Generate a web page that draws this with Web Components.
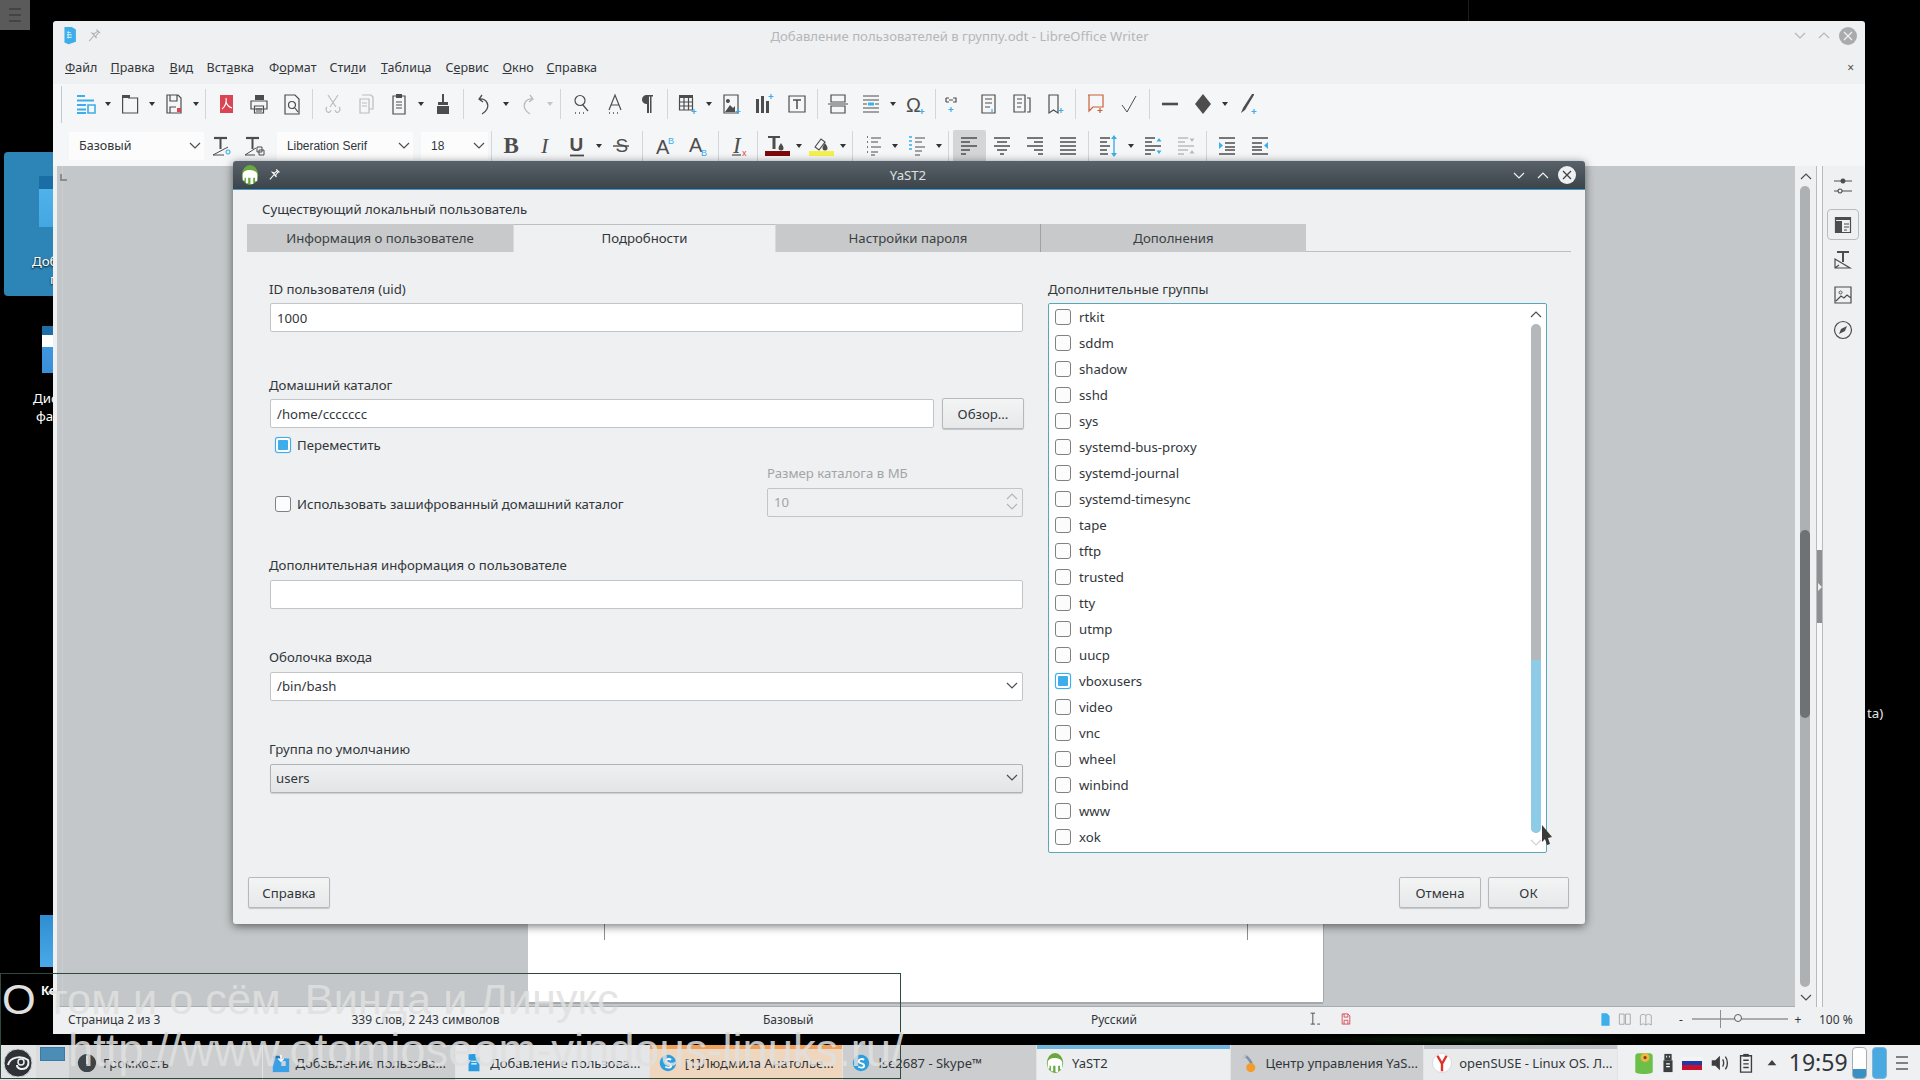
<!DOCTYPE html>
<html lang="ru">
<head>
<meta charset="utf-8">
<title>YaST2</title>
<style>
html,body{margin:0;padding:0;background:#000;overflow:hidden}
</style>
</head>
<body>
<desk-top>
  <desk-corner></desk-corner>
  <desk-icon style="left:4px;top:152px;width:160px;height:144px;--bg:#2d85b7;--f:35px;--t:24px;--fh:51px;--tx:100px;--tl:28px" kind="a"><div>Добавление</div><div style="padding-left:18px">польз</div></desk-icon>
  <desk-icon style="left:4px;top:326px;width:160px;height:110px;--f:38px;--t:0px;--fh:47px;--tx:63px" kind="b"><div>Диспетчер</div><div style="padding-left:3px">файлов</div></desk-icon>
  <desk-icon style="left:4px;top:915px;width:160px;height:90px;--f:36px;--t:0px;--fh:52px;--tx:67px;--fs:12px" kind="c"><div style="padding-left:8px;font-weight:700">Ке</div></desk-icon>
  <desk-note>ta)</desk-note>

  <writer-window>
    <menu-item style="width:45.500px"><u>Ф</u>айл</menu-item><menu-item style="width:59px"><u>П</u>равка</menu-item><menu-item style="width:37px"><u>В</u>ид</menu-item><menu-item style="width:62.500px">Вст<u>а</u>вка</menu-item><menu-item style="width:60.500px">Ф<u>о</u>рмат</menu-item><menu-item style="width:51.500px">Сти<u>л</u>и</menu-item><menu-item style="width:64.500px"><u>Т</u>аблица</menu-item><menu-item style="width:57px">С<u>е</u>рвис</menu-item><menu-item style="width:44px"><u>О</u>кно</menu-item><menu-item><u>С</u>правка</menu-item>
    <tool-bar slot="t1" style="padding-bottom:2px">
      <tool-btn icon="styles"></tool-btn><tool-drop></tool-drop><tool-btn icon="open"></tool-btn><tool-drop></tool-drop><tool-btn icon="save"></tool-btn><tool-drop></tool-drop><tool-sep></tool-sep>
      <tool-btn icon="pdf"></tool-btn><tool-btn icon="print"></tool-btn><tool-btn icon="preview"></tool-btn><tool-sep></tool-sep>
      <tool-btn icon="cut"></tool-btn><tool-btn icon="copy"></tool-btn><tool-btn icon="paste"></tool-btn><tool-drop></tool-drop><tool-btn icon="brush"></tool-btn><tool-sep></tool-sep>
      <tool-btn icon="undo"></tool-btn><tool-drop></tool-drop><tool-btn icon="redo"></tool-btn><tool-drop off></tool-drop><tool-sep style="width:10px"></tool-sep>
      <tool-btn icon="find"></tool-btn><tool-btn icon="spell"></tool-btn><tool-btn icon="pilcrow"></tool-btn><tool-sep style="width:6px"></tool-sep>
      <tool-btn icon="table"></tool-btn><tool-drop></tool-drop><tool-btn icon="image"></tool-btn><tool-btn icon="chart"></tool-btn><tool-btn icon="textbox"></tool-btn><tool-sep></tool-sep>
      <tool-btn icon="pagebreak"></tool-btn><tool-btn icon="field"></tool-btn><tool-drop></tool-drop><tool-btn icon="omega"></tool-btn><tool-sep></tool-sep>
      <tool-btn icon="link"></tool-btn><tool-btn icon="footnote"></tool-btn><tool-btn icon="endnote"></tool-btn><tool-btn icon="bookmark"></tool-btn><tool-sep></tool-sep>
      <tool-btn icon="comment"></tool-btn><tool-btn icon="check"></tool-btn><tool-sep></tool-sep>
      <tool-btn icon="line"></tool-btn><tool-btn icon="diamond"></tool-btn><tool-drop></tool-drop><tool-btn icon="pen"></tool-btn>
    </tool-bar>
    <tool-bar slot="t2">
      <tool-combo style="width:135px">Базовый</tool-combo><tool-btn icon="styleupd"></tool-btn><tool-btn icon="stylenew"></tool-btn>
      <tool-combo style="width:136px;margin-left:7px;font:12px 'Liberation Sans',sans-serif;letter-spacing:-.05px">Liberation Serif</tool-combo>
      <tool-combo style="width:67px;margin-left:8px;font:12px 'Liberation Sans',sans-serif">18</tool-combo><tool-sep style="width:7.500px"></tool-sep>
      <tool-btn icon="bold"></tool-btn><tool-btn icon="italic"></tool-btn><tool-btn icon="under" style="margin-left:-1px"></tool-btn><tool-drop></tool-drop><tool-btn icon="strike"></tool-btn><tool-sep style="width:10.500px"></tool-sep>
      <tool-btn icon="sup"></tool-btn><tool-btn icon="sub"></tool-btn><tool-sep></tool-sep>
      <tool-btn icon="clear"></tool-btn><tool-sep style="width:5.500px"></tool-sep>
      <tool-btn icon="fcolor"></tool-btn><tool-drop></tool-drop><tool-btn icon="hcolor"></tool-btn><tool-drop></tool-drop><tool-sep></tool-sep>
      <tool-btn icon="bullets"></tool-btn><tool-drop></tool-drop><tool-btn icon="numbers"></tool-btn><tool-drop></tool-drop><tool-sep></tool-sep>
      <tool-btn icon="aleft" on></tool-btn><tool-btn icon="acenter"></tool-btn><tool-btn icon="aright"></tool-btn><tool-btn icon="ajust"></tool-btn><tool-sep></tool-sep>
      <tool-btn icon="spacing"></tool-btn><tool-drop></tool-drop><tool-btn icon="paraup"></tool-btn><tool-btn icon="paradown"></tool-btn><tool-sep></tool-sep>
      <tool-btn icon="indent"></tool-btn><tool-btn icon="outdent"></tool-btn>
    </tool-bar>
    <status-bar slot="status"></status-bar>
  </writer-window>

  <yast-dialog>
    <field-label>ID пользователя (uid)</field-label>
    <text-field style="margin-top:4px">1000</text-field>
    <field-label style="margin-top:43px">Домашний каталог</field-label>
    <form-row style="margin-top:4px"><text-field style="flex:1">/home/ccccccc</text-field><push-button style="width:82px;height:31px;margin-left:8px;margin-right:-1px;margin-top:-1px">Обзор...</push-button></form-row>
    <check-box checked style="margin:6px 0 0 6px;--g:6px">Переместить</check-box>
    <form-row style="margin-top:8px">
      <check-box style="margin:31px 0 0 6px;--g:6px;flex:1">Использовать зашифрованный домашний каталог</check-box>
      <form-col style="width:256px">
        <field-label style="--c:#a2a5a7">Размер каталога в МБ</field-label>
        <text-field disabled spin style="margin-top:5px;margin-left:0">10</text-field>
      </form-col>
    </form-row>
    <field-label style="margin-top:38px">Дополнительная информация о пользователе</field-label>
    <text-field style="margin-top:5px"></text-field>
    <field-label style="margin-top:38px">Оболочка входа</field-label>
    <text-field combo style="margin-top:5px">/bin/bash</text-field>
    <field-label style="margin-top:38px">Группа по умолчанию</field-label>
    <text-field combo flat style="margin-top:5px">users</text-field>

    <field-label slot="right">Дополнительные группы</field-label>
    <group-list slot="right" style="margin-top:4px">
      <check-box>rtkit</check-box><check-box>sddm</check-box><check-box>shadow</check-box><check-box>sshd</check-box><check-box>sys</check-box><check-box>systemd-bus-proxy</check-box><check-box>systemd-journal</check-box><check-box>systemd-timesync</check-box><check-box>tape</check-box><check-box>tftp</check-box><check-box>trusted</check-box><check-box>tty</check-box><check-box>utmp</check-box><check-box>uucp</check-box><check-box checked>vboxusers</check-box><check-box>video</check-box><check-box>vnc</check-box><check-box>wheel</check-box><check-box>winbind</check-box><check-box>www</check-box><check-box>xok</check-box>
    </group-list>

    <push-button slot="foot" style="width:82px">Справка</push-button>
    <push-button slot="foot" style="width:82px;margin-left:auto">Отмена</push-button>
    <push-button slot="foot" style="width:81px;margin-left:7px">ОК</push-button>
  </yast-dialog>

  <mouse-cursor></mouse-cursor>

  <task-bar>
    <task-item icon="volume" style="--gap:6px">Громкость</task-item>
    <task-item icon="folderblue" style="--gap:5px">Добавление пользова...</task-item>
    <task-item icon="writer" state="light" style="--gap:6px">Добавление пользова...</task-item>
    <task-item icon="skype" state="urgent">[1]Людмила Анатолье...</task-item>
    <task-item icon="skype">lse2687 - Skype™</task-item>
    <task-item icon="yast" state="active">YaST2</task-item>
    <task-item icon="yastc">Центр управления YaS...</task-item>
    <task-item icon="yandex" state="lightstrip">openSUSE - Linux OS. Л...</task-item>
  </task-bar>

  <video-caption></video-caption>
</desk-top>

<script>
const S='#4d4d4d', B='#3daee9', R='#da4453', L='#b9bcbe';
const p=(d,c=S,w=1.2)=>`<path d="${d}" stroke="${c}" stroke-width="${w}" fill="none"/>`;
const f=(d,c=S)=>`<path d="${d}" fill="${c}"/>`;
const t=(s,x,y,sz,o='')=>`<text x="${x}" y="${y}" font-size="${sz}" fill="${S}" ${o}>${s}</text>`;
const ICONS={
 styles:p('M2 3h8M2 7.500h17M2 12h9M2 16.500h9M2 20h9',B,2)+p('M13 12h7v8h-7z',B,1.600),
 open:f('M3 2h8v3H3z')+p('M3.600 3v17h15V5H9'),
 save:p('M4 2h11l3 3v15H4zM7 2v6h7V2M7 20v-6h6')+f('M14 15h4v4h-4z',R),
 pdf:f('M5 2h13v18H5z',R)+p('M7 16c3-2 5-7 4-11M11 9c1 3 3 5 6 6','#fff',1.200),
 print:f('M7 2h9v5H7z')+p('M3 8h16v8H3zM6.500 13h9v7h-9z')+p('M8 16h6M8 18h6'),
 preview:p('M4 2h10l4 4v15H4z')+p('M14.500 12a3.500 3.500 0 1 0-7 0a3.500 3.500 0 0 0 7 0M14 15l3 4'),
 cut:p('M6 2l8 12M16 2L8 14M5 14a2.500 3 0 1 0 4 3M17 14a2.500 3 0 1 1-4 3',L),
 copy:p('M7 2h9l2 2v12h-4M5 6h9v14H5zM7 10h5M7 13h5',L),
 paste:f('M8 1h6v4H8z')+p('M5 3h12v18H5zM8 9h6M8 12h6M8 15h6'),
 brush:f('M10 1h2v8h-2z')+f('M6 9h10v3H6zM5 13h12v8H5z'),
 undo:p('M9 2L6 6l4 3M6 6c8-1 10 6 8 10c-1 2-3 4-5 5',S,1.300),
 redo:p('M13 2l3 4-4 3M16 6c-8-1-10 6-8 10c1 2 3 4 5 5',L,1.300),
 find:p('M14 7.500a5 5 0 1 0-10 0a5 5 0 0 0 10 0M12 12l5 6')+p('M4 20h1M8 20h1M12 20h1',S,1.400),
 spell:p('M5 17L11 2l6 15M7 12h8')+p('M5 20h1M9 20h1M13 20h1',S,1.400),
 pilcrow:f('M9 2h7v1.500h-1.500V20h-1.500V3.500h-1V20H10v-9a4.500 4.500 0 0 1-1-9z'),
 table:f('M3 2h14v3H3z')+p('M3.500 5v12h13V5M3.500 9h13M3.500 13h13M8 5v12M12.500 5v12')+p('M18 16v5M15.500 18.500h5',B),
 image:p('M4 2h14v18H4z')+f('M8 6a2 2 0 1 1-.1 0z')+f('M5 19l5-7 3 3 2-2v6z')+p('M18 16v5M15.500 18.500h5',B),
 chart:f('M3 6h3v14H3zM8 3h3v17H8zM13 8h3v12h-3z')+p('M18 1v5M15.500 3.500h5',B),
 textbox:p('M3 3h16v16H3z')+p('M7 7h8M11 7v9',S,1.500),
 pagebreak:p('M4 2h14v7H4zM4 13h14v7H4zM1 11h20',S,1.200),
 field:p('M3 3h16M3 7h16M3 15h16M3 19h16')+f('M8 9.500h6v3H8z',B)+p('M3 11h4M15 11h4'),
 omega:t('Ω',2,19,20,'font-family="Liberation Sans"')+p('M18 16v5M15.500 18.500h5',B),
 link:p('M1 5h3M1 9h3M1 5v4M8 5h3v4H8M4 7h4')+p('M6 14v5M3.500 16.500h5',B),
 footnote:p('M4 2h13v18H4zM7 6h7M7 10h7M7 14h5')+p('M14 16v4',B),
 endnote:p('M3 2h11v17H3zM6 6h5M6 10h5M6 14h4M16 5h3v14h-3',S),
 bookmark:p('M5 2h9v18l-4.500-3L5 20z')+p('M17 15v5M14.500 17.500h5',B),
 comment:p('M3 2h15v12H8l-4 4V2','#c9603a')+p('M15 15v5M12.500 17.500h5','#c9603a'),
 check:p('M4 12l5 7L18 3',S,1),
 line:p('M3 11h16',S,2.600),
 diamond:f('M11 1l8 10-8 10-8-10z'),
 pen:f('M18 1l-2 0-9 14-2 5 4-3 9-15z')+p('M18 16v5M15.500 18.500h5',B),
 styleupd:p('M4 3h13',S,2.200)+p('M10.500 3v11',S,2)+p('M3 20L18 12M3 20h11',S,1)+p('M18 15a2 2 0 1 0 .1 0',B,1.100),
 stylenew:p('M3 3h13',S,2.200)+p('M9.500 3v11',S,2)+p('M2 20l11-7M2 20h10',S,1)+p('M14 12h5v5h-5zM16 15h5v5h-5z',S,1),
 bold:t('B',2.500,18,23,'font-family="Liberation Serif" font-weight="700"'),
 italic:t('I',7,18,22,'font-family="Liberation Serif" font-style="italic"'),
 under:t('U',3.500,16,19,'font-family="Liberation Sans" font-weight="700"')+p('M4 20.500h14',S,1.800),
 strike:t('S',5.500,17,19,'font-family="Liberation Sans"')+p('M3 11h16',S,1.400),
 sup:t('A',2,19,20,'font-family="Liberation Sans"')+`<text x="14" y="9" font-size="9" fill="${B}" font-family="Liberation Sans">B</text>`,
 sub:t('A',2,17,20,'font-family="Liberation Sans"')+`<text x="14" y="21" font-size="9" fill="${B}" font-family="Liberation Sans">B</text>`,
 clear:t('I',5,18,23,'font-family="Liberation Serif" font-style="italic"')+`<text x="14" y="21" font-size="9" fill="${R}" font-family="Liberation Sans">x</text>`+p('M4 20h9',S,1.200),
 fcolor:f('M2 1h12v2H9.500v11h-3V3H2z')+f('M15 8c2 3 2.500 4 2.500 5a2.500 2.500 0 0 1-5 0c0-1 .5-2 2.500-5z')+f('M-1 16h25v5H-1z','#7d0a0a'),
 hcolor:p('M5 12l6-8 4 3-6 8z')+f('M15 8c2 3 2.500 4 2.500 5a2.500 2.500 0 0 1-5 0c0-1 .5-2 2.500-5z')+f('M-1 16h25v5H-1z','#f6f14a'),
 bullets:p('M5 2h1M5 7h1M5 12h1M5 17h1',S,1.600)+p('M9 3h10M9 7h7M9 12h10M9 17h7M9 20h4'),
 numbers:p('M3 2h3M3 10h3',B,1.600)+p('M9 3h10M9 7h7M9 12h10M9 16h7M9 20h5')+p('M3 6h3M3 14h3',B,1.600),
 aleft:p('M3 3h16M3 7h9M3 11h16M3 15h9M3 19h5',S,1.400),
 acenter:p('M3 3h16M6 7h10M3 11h16M6 15h10M9 19h4',S,1.400),
 aright:p('M3 3h16M10 7h9M3 11h16M10 15h9M14 19h5',S,1.400),
 ajust:p('M3 3h16M3 7h16M3 11h16M3 15h16M3 19h16',S,1.400),
 spacing:p('M2 3h10M2 7h7M2 11h10M2 15h7M2 19h8',S,1.400)+p('M16 2v18',B,1.400)+f('M16 0l-3 4h6zM16 22l-3-4h6z',B),
 paraup:p('M3 3h10M3 7h7M3 11h16M3 15h10M3 19h6',S,1.400)+f('M17 3l-2.500 3.500h5zM17 19l-2.500-3.500h5z',B),
 paradown:p('M3 3h10M3 7h7M3 11h16M3 15h10M3 19h6',L,1.400)+f('M17 7l-2.500-3.500h5zM17 15l-2.500 3.500h5z',L),
 indent:p('M3 3h16M9 8h10M9 12h10M9 15h10M3 19h16',S,1.400)+f('M3 7l4 3.500-4 3.500z',B),
 outdent:p('M3 3h16M3 8h10M3 12h10M3 15h10M3 19h16',S,1.400)+f('M19 7l-4 3.500 4 3.500z',B),
 props:p('M2 5h18M2 15h4M10 15h10')+f('M11 2.500a2.500 2.500 0 1 1-.1 0z')+p('M8 13a2 2 0 1 0 .1 0'),
 page:f('M3 3h16v3H3zM4 7h6v11H4z')+p('M3.500 3.500h15v15h-15zM12 10h5M12 13h5M12 16h3'),
 tstyle:f('M5 2h12v2H12v9h-2V4H5z')+p('M3 10v9h15zM3 19l4-3',S,1.200),
 gallery:p('M3 3h16v16H3zM4 17l5-5 3 2 3-3 4 3')+p('M8.500 7a1.500 1.500 0 1 0 .1 0',S,1),
 compass:p('M19.500 11a8.500 8.500 0 1 0-17 0a8.500 8.500 0 0 0 17 0')+f('M15 7l-6 3-2 5 6-3z'),
 writerapp:f('M3 0h9l5 3v15l-9 3-5-2z',B)+f('M6 6h5v1H6zM6 9h6v1H6zM6 12h6v1H6zM7 5h1v9H7z','#d6eefb'),
 pinw:p('M13 2l5 5M15 4l-5 4-3-1 6 7-1-3 4-5','#fff',1.700)+p('M9 11l-6 7','#fff',1.700),
 ping:p('M13 2l5 5M15 4l-5 4-3-1 6 7-1-3 4-5M9 11l-6 7','#b0b3b5',1.500),
 yast:`<ellipse cx="11" cy="11" rx="9" ry="11" fill="#69a83f"/><path d="M3 10c1-6 14-6 16 0v8h-2.500v-4h-2v7h-3v-7H9v6H6.500v-6H5v3H3z" fill="#fff"/>`,
 yastc:p('M6 3c4 1 6 5 8 9','#7d93ad',3)+f('M13 11a5 5 0 1 1 -.1 0z','#f39c2b')+p('M4 6a4 4 0 0 1 4-3','#c0c7ce',2),
 volume:f('M11 1a10 10 0 1 1-.1 0z','#3f4447')+p('M11 3v9','#e8e8e8',1.800),
 folderblue:f('M2 6h18v15H2z','#3a9fe5')+f('M2 3h7l2 3H2z','#1e76b8')+p('M11 2v7M8 6l3 3 3-3','#fff',1.600),
 writer:f('M5 1h8l4 4v15H5z','#2b9be0')+f('M13 1l4 4h-4z','#a9dcf8')+p('M8 9h6M8 12h6','#fff',1.200),
 skype:f('M11 2a9 9 0 1 1-.1 0z','#2d9fdc')+p('M14.500 7.500c-2-1.500-6-1-6 1.500c0 3 6 2 6 5c0 2.500-4.500 2.500-6.500 1','#fff',2),
 yandex:`<circle cx="11" cy="11" r="10.500" fill="#fff" stroke="#d8d8d8"/>`+p('M6 3l5 9 5-9M11 12v8','#e0322a',2.600),
 sun:f('M3 5c0-2 1-3 3-3h10c2 0 3 1 3 3v14c0 1-2 2-8 2s-8-1-8-2z','#6cc04a')+f('M12 2a4 4 0 1 1-.1 0z','#f4b53f')+f('M12 4.500a1.500 1.500 0 1 1-.1 0z','#7a4a1e'),
 usb:f('M7 1h8v7H7z','#3b3f42')+f('M6 8h10v13H6z','#3b3f42')+p('M9 12h4M9 15h4','#fff',1.400)+f('M9 3h1v2H9zM12 3h1v2h-1z','#fff'),
 flag:f('M1 5h20v4H1z','#f4f4f4')+f('M1 9h20v4H1z','#1c3aa9')+f('M1 13h20v5H1z','#c8102e'),
 speaker:f('M3 8h4l5-5v16l-5-5H3z','#3b3f42')+p('M15 7c1.500 2 1.500 6 0 8M18 4c3 4 3 10 0 14','#3b3f42',1.500),
 clip:f('M8 1h6v3H8z','#3b3f42')+p('M5 3h12v18H5zM8 8h6M8 12h6M8 16h6','#3b3f42',1.500),
 tri:f('M11 7l6 7H5z','#3b3f42'),
 view1:f('M5 2h8l4 4v14H5z',B),
 view2:p('M2 3h7v15H2zM11 3h7v15h-7z','#8a8d8f',1),
 view3:p('M2 5c3-2 5-2 8 0c3-2 5-2 8 0v14c-3-2-5-2-8 0c-3-2-5-2-8 0zM10 5v14','#8a8d8f',1),
 insert:p('M5 3h6M5 18h6M8 3v15M14 18h4',S,1.300),
 disk:p('M5 3h9l3 3v13H5zM8 3v5h6V3M8 19v-6h6v6',R,1.400),
};
function svg(name,size=22){return `<svg xmlns="http://www.w3.org/2000/svg" width="${size}" height="${size}" viewBox="0 0 22 22" style="display:block;flex:none;overflow:visible">${ICONS[name]||''}</svg>`;}
const chev=(c='#4d4d4d',d='M1 1l5 5 5-5')=>`<svg width="12" height="7" viewBox="0 0 12 7" style="display:block;flex:none"><path d="${d}" fill="none" stroke="${c}" stroke-width="1.200"/></svg>`;
const chevUp='M1 6l5-5 5 5';
const FONT='"Noto Sans","Open Sans",sans-serif';

function def(name,render){
  customElements.define(name,class extends HTMLElement{
    connectedCallback(){
      if(this.shadowRoot) return;
      this.attachShadow({mode:'open'}).innerHTML=render(this);
    }
  });
}

def('desk-top',()=>`<style>:host{display:flex;flex-direction:column;justify-content:flex-end;position:relative;width:1920px;height:1080px;background:#000;overflow:hidden;font:13.200px ${FONT};color:#31363b}
.glow{position:absolute;left:1310px;top:1034px;width:320px;height:11px;background:radial-gradient(ellipse at center,#0a200a 0,#000 75%)}
.line{position:absolute;left:1468px;top:0;width:1px;height:21px;background:#1c1c1c}</style><div class="glow"></div><div class="line"></div><slot></slot>`);

def('desk-corner',()=>`<style>:host{position:absolute;left:0;top:0;width:30px;height:30px;background:#5a5a5a;display:flex;flex-direction:column;gap:4px;align-items:center;justify-content:center}
i{display:block;width:12px;height:2px;background:#444}</style><i></i><i></i><i></i>`);

def('desk-icon',(e)=>{
  const k=e.getAttribute('kind');
  const folder=k==='a'?`<div class="fold" style="background:linear-gradient(#1a6ea6 0 13px,#4fb2ea 13px,#45a7e2)"></div>`:
   k==='b'?`<div class="fold" style="background:linear-gradient(#1f6ea8 0 9px,#fff 9px 21px,#3f97df 21px,#3a8fd8)"></div>`:
   `<div class="fold" style="background:linear-gradient(#2f8ed0,#4aa9e8)"></div>`;
  return `<style>:host{position:absolute;display:block;background:var(--bg,transparent);border-radius:4px;color:#fff;font:13.300px ${FONT};line-height:18px;text-shadow:0 1px 2px #000}
  .fold{position:absolute;left:var(--f);top:var(--t);width:30px;height:var(--fh)}
  .txt{position:absolute;left:var(--tl,29px);top:var(--tx);white-space:nowrap;font-size:var(--fs,13.300px)}</style>${folder}<div class="txt"><slot></slot></div>`;
});

def('desk-note',()=>`<style>:host{position:absolute;left:1867px;top:704px;color:#e6e6e6;font:13.300px ${FONT};line-height:18px}</style><slot></slot>`);

def('writer-window',()=>`<style>
:host{position:absolute;left:53px;top:21px;width:1812px;height:1013px;display:flex;flex-direction:column;background:#eff0f1;border-radius:3px 3px 0 0;font:13.130px ${FONT};color:#31363b}
.title{height:31px;display:flex;align-items:center;flex:none;padding-bottom:2px;box-sizing:border-box}
.side{flex:1;display:flex;align-items:center}
.l{padding-left:9px;gap:7px}
.r{justify-content:flex-end;padding-right:8px;gap:6px}
.btn{width:18px;height:18px;display:flex;align-items:center;justify-content:center}
.close{background:#a9acae;border-radius:50%;color:#eff0f1}
.name{color:#b4b7b9;white-space:nowrap}
.menu{height:32px;flex:none;display:flex;align-items:center;padding:0 11px 1px 12px;box-sizing:border-box}
.x{margin-left:auto;color:#4d4d4d;font-size:12px}
.tbs{background:#f5f6f7;flex:none;position:relative}
.grip{position:absolute;left:8px;top:2px;height:37px;width:1px;background:#c6c9cb}
.work{flex:1;display:flex;min-height:0;padding-left:4px}
.doc{flex:1;background:#c3c7c9;display:flex;min-width:0;border-bottom:1px solid #a9acae}
.gutter{width:5px;border-right:1px solid #cbced0;position:relative;flex:none}
.corner{position:absolute;left:3px;top:8px;width:5px;height:5px;border-left:2px solid #8a8d8f;border-bottom:2px solid #8a8d8f}
.page{width:795px;margin:0 0 4px 465px;background:#fff;box-shadow:0 2px 0 #a6a9ab,1px 0 0 #a6a9ab;display:flex;justify-content:space-between;padding:0 75px 0 76px;box-sizing:border-box;align-items:flex-end}
.crop{width:1px;height:16px;background:#8c8f91;margin-bottom:62px;position:relative}
.scroll{width:21px;flex:none;display:flex;flex-direction:column;align-items:center;box-sizing:border-box}
.arrow{height:20px;display:flex;align-items:center;justify-content:center;flex:none}
.track{flex:1;width:10px;display:flex;flex-direction:column;border-radius:5px;overflow:hidden;background:#aeb1b3;margin-left:-1px}
.track i{display:block;flex:none}
.handle{flex:none;border-left:1px solid #b8bbbd;border-right:1px solid #b8bbbd;background:#f6f7f7;display:flex;align-items:center;width:5px}
.handle b{display:flex;align-items:center;height:73px;width:5px;background:#8e9193}
.handle b::after{content:"";border-left:4px solid #eee;border-top:4px solid transparent;border-bottom:4px solid transparent;margin-left:1px}
.sb{width:42px;flex:none;display:flex;flex-direction:column;align-items:center;padding-right:3px;box-sizing:border-box}
.sb div{height:35px;width:100%;display:flex;align-items:center;justify-content:center;flex:none}
.sb div:first-child{height:41px}
.sb div.sel{height:31px;width:32px;border:1px solid #b9bcbe;border-radius:4px;box-sizing:border-box;margin:2px 0}
</style>
<div class="title">
  <div class="side l">${svg('writerapp',18)}${svg('ping',16)}</div>
  <div class="name">Добавление пользователей в группу.odt - LibreOffice Writer</div>
  <div class="side r"><div class="btn">${chev('#b4b7b9')}</div><div class="btn">${chev('#b4b7b9',chevUp)}</div><div class="btn close"><svg width="10" height="10" viewBox="0 0 10 10"><path d="M1 1l8 8M9 1l-8 8" stroke="#eff0f1" stroke-width="1.300"/></svg></div></div>
</div>
<div class="menu"><slot></slot><div class="x">×</div></div>
<div class="tbs"><div class="grip"></div><slot name="t1"></slot><slot name="t2"></slot></div>
<div class="work">
  <div class="doc"><div class="gutter"><div class="corner"></div></div><div class="page"><div class="crop"></div><div class="crop"></div></div></div>
  <div class="scroll"><div class="arrow">${chev('#4d4d4d',chevUp)}</div><div class="track"><i style="height:344px"></i><i style="height:188px;background:#6f7275;border-radius:5px"></i></div><div class="arrow">${chev('#4d4d4d')}</div></div>
  <div class="handle"><b></b></div>
  <div class="sb"><div>${svg('props')}</div><div class="sel">${svg('page')}</div><div>${svg('tstyle')}</div><div>${svg('gallery')}</div><div>${svg('compass')}</div></div>
</div>
<slot name="status"></slot>`);

def('menu-item',()=>`<style>:host{display:block;white-space:nowrap;font-size:12.500px;flex:none}</style><slot></slot>`);

def('tool-bar',()=>`<style>:host{display:flex;align-items:center;height:41px;padding-left:16px;box-sizing:border-box}</style><slot></slot>`);
def('tool-btn',(e)=>`<style>:host{display:flex;align-items:center;justify-content:center;width:33px;height:32px;flex:none;${e.hasAttribute('on')?'background:#d3d5d6;border-radius:2px;':''}}</style>${svg(e.getAttribute('icon'))}`);
def('tool-drop',(e)=>`<style>:host{display:flex;align-items:center;justify-content:center;width:11px;height:30px;flex:none}
i{display:block;border-top:4px solid ${e.hasAttribute('off')?'#c4c7c9':'#333'};border-left:3px solid transparent;border-right:3px solid transparent}</style><i></i>`);
def('tool-sep',()=>`<style>:host{display:flex;justify-content:center;width:8px;height:30px;flex:none}i{display:block;width:1px;height:100%;background:#d4d6d8}</style><i></i>`);
def('tool-combo',()=>`<style>:host{display:flex;align-items:center;justify-content:space-between;height:28px;background:#fcfcfc;padding:0 3px 0 10px;box-sizing:border-box;flex:none;font-size:12.500px;color:#31363b}</style><slot></slot>${chev('#4d4d4d')}`);

def('status-bar',()=>`<style>:host{display:flex;align-items:center;height:27px;box-sizing:border-box;flex:none;padding:0 12px 3px 15px;font-size:12px;white-space:nowrap;color:#31363b}
.c{flex:none}.ic{display:flex;align-items:center;justify-content:center}
.right{margin-left:auto;display:flex;align-items:center}
.sl{width:96px;height:2px;background:#a9acae;position:relative;margin:0 5px 0 6px}
.tick{position:absolute;left:28px;top:-8px;width:1px;height:18px;background:#8c8f91}
.knob{position:absolute;left:42px;top:-4px;width:8px;height:8px;border:1px solid #5b5e60;border-radius:50%;background:#eff0f1;box-sizing:border-box}
</style>
<div class="c" style="width:283.500px">Страница 2 из 3</div>
<div class="c" style="width:411.500px">339 слов, 2 243 символов</div>
<div class="c" style="width:328px">Базовый</div>
<div class="c" style="width:215px">Русский</div>
<div class="c ic" style="width:18px">${svg('insert',16)}</div>
<div class="c ic" style="width:18px;margin-left:13px">${svg('disk',14)}</div>
<div class="right">
  <div class="ic" style="width:20px">${svg('view1',15)}</div><div class="ic" style="width:21px">${svg('view2',15)}</div><div class="ic" style="width:21px">${svg('view3',15)}</div>
  <div class="c" style="margin-left:19px;width:10px;text-align:center">-</div><div class="sl"><div class="tick"></div><div class="knob"></div></div><div class="c" style="width:10px;text-align:center">+</div>
  <div class="c" style="margin-left:16px;width:34px">100 %</div>
</div>`);

def('yast-dialog',()=>`<style>
:host{position:absolute;left:233px;top:161px;width:1352px;height:763px;display:flex;flex-direction:column;background:#eff0f1;border-radius:3px;box-shadow:0 2px 10px rgba(0,0,0,.55);font:13.200px ${FONT};color:#31363b}
.title{height:28px;flex:none;display:flex;align-items:center;background:linear-gradient(#59626a,#3b4449);border-bottom:1px solid #3f9ad0;color:#dfe1e2;border-radius:3px 3px 0 0}
.side{flex:1;display:flex;align-items:center}
.l{padding-left:7px;gap:8px}.r{justify-content:flex-end;padding-right:9px;gap:6px}
.btn{width:18px;height:18px;display:flex;align-items:center;justify-content:center}
.close{background:#eff0f1;border-radius:50%}
.head{height:24px;flex:none;margin-top:10px;padding:0 0 6px 29px;display:flex;align-items:center;box-sizing:border-box}
.tabs{height:28px;flex:none;display:flex;margin:0 14px;border-bottom:1px solid #bcbfc1;box-sizing:border-box}
.tab{height:28px;display:flex;align-items:center;justify-content:center;background:#c7c9ca;flex:none;box-sizing:border-box;color:#3a3f43}
.tab.on{background:#eff0f1;border-top:1px solid #bcbfc1;border-left:1px solid #d8dadb;border-right:1px solid #d8dadb;color:#31363b;padding-bottom:2px}
.main{flex:1;display:flex;min-height:0;padding:27px 38px 0 36px}
.left{width:754px;flex:none;display:flex;flex-direction:column}
.right{margin-left:25px;flex:1;display:flex;flex-direction:column;min-width:0}
.foot{flex:none;display:flex;padding:0 16px 16px 15px}
</style>
<div class="title">
  <div class="side l">${svg('yast',20)}${svg('pinw',14)}</div>
  <div>YaST2</div>
  <div class="side r"><div class="btn">${chev('#eff0f1')}</div><div class="btn">${chev('#eff0f1',chevUp)}</div><div class="btn close"><svg width="10" height="10" viewBox="0 0 10 10"><path d="M1 1l8 8M9 1l-8 8" stroke="#3b4449" stroke-width="1.300"/></svg></div></div>
</div>
<div class="head">Существующий локальный пользователь</div>
<div class="tabs">
  <div class="tab" style="width:266px">Информация о пользователе</div>
  <div class="tab on" style="width:263px">Подробности</div>
  <div class="tab" style="width:265px;border-right:1px solid #9fa2a4">Настройки пароля</div>
  <div class="tab" style="width:265px">Дополнения</div>
</div>
<div class="main"><div class="left"><slot></slot></div><div class="right"><slot name="right"></slot></div></div>
<div class="foot"><slot name="foot"></slot></div>`);

def('field-label',()=>`<style>:host{display:flex;align-items:center;height:20px;flex:none;color:var(--c,#31363b);white-space:nowrap}</style><slot></slot>`);
def('form-row',()=>`<style>:host{display:flex;flex:none;align-items:flex-start}</style><slot></slot>`);
def('form-col',()=>`<style>:host{display:flex;flex-direction:column;flex:none}</style><slot></slot>`);
def('text-field',(e)=>{
  const dis=e.hasAttribute('disabled'),flat=e.hasAttribute('flat');
  const bg=flat?'linear-gradient(#eff0f1,#e3e4e5)':dis?'#eff0f1':'#fff';
  const right=e.hasAttribute('combo')?chev('#4d4d4d'):e.hasAttribute('spin')?`<div style="display:flex;flex-direction:column;gap:3px">${chev('#b4b7b9',chevUp)}${chev('#b4b7b9')}</div>`:'';
  return `<style>:host{display:flex;align-items:center;justify-content:space-between;height:29px;box-sizing:border-box;margin-left:1px;padding:0 ${flat||right?'4px':'6px'} ${right?'2px':'0'} ${flat?'5px':'6px'};background:${bg};border:1px solid ${flat?'#b0b3b5':'#c2c5c7'};border-radius:2px;flex:none;color:${dis?'#a2a5a7':'#31363b'};${flat?'box-shadow:0 1px 1px rgba(0,0,0,.15);':''}}</style><slot></slot>${right}`;
});
def('push-button',()=>`<style>:host{display:flex;align-items:center;justify-content:center;height:31px;box-sizing:border-box;background:linear-gradient(#f3f4f4,#e7e8e9);border:1px solid #b6b9bb;border-radius:2px;box-shadow:0 1px 1px rgba(0,0,0,.18);flex:none}</style><slot></slot>`);
def('check-box',(e)=>{
  const on=e.hasAttribute('checked');
  return `<style>:host{display:flex;align-items:center;gap:var(--g,8px);height:var(--h,20px);flex:none;white-space:nowrap}
  .b{width:16px;height:16px;box-sizing:border-box;border:1px solid ${on?'#3daee9':'#7f8284'};border-radius:3px;background:#fcfcfc;padding:2px;flex:none;${on?'box-shadow:0 0 1px #3daee9;':''}}
  .b i{display:block;width:100%;height:100%;background:${on?'#3daee9':'transparent'};border-radius:1px}</style><div class="b"><i></i></div><slot></slot>`;
});
def('group-list',()=>`<style>:host{display:flex;height:550px;box-sizing:border-box;border:1px solid #5aa6ba;border-radius:2px;background:#fff;flex:none;--h:26px}
.rows{flex:1;padding-left:6px;display:flex;flex-direction:column;min-width:0}
.sc{width:10px;margin-right:5px;flex:none;display:flex;flex-direction:column;align-items:center}
.a{height:20px;display:flex;align-items:center;justify-content:center;flex:none}
.tr{flex:1;display:flex;flex-direction:column;width:10px;border-radius:5px;overflow:hidden;background:#b5b8ba}
.sp{flex:none;height:336px}.th{flex:1;background:#8dcbe6;border-radius:0 0 5px 5px}
.a2{height:19px}</style>
<div class="rows"><slot></slot></div>
<div class="sc"><div class="a">${chev('#4d4d4d',chevUp)}</div><div class="tr"><div class="sp"></div><div class="th"></div></div><div class="a a2">${chev('#d0d2d4')}</div></div>`);

def('mouse-cursor',()=>`<style>:host{position:absolute;left:1541px;top:825px;width:12px;height:21px;display:block}</style><svg width="12" height="21" viewBox="0 0 12 21"><path d="M1 0l10 12-4 1 2 6-3 1-2-6-3 3z" fill="#3a3a3a"/></svg>`);

def('task-bar',()=>`<style>:host{display:flex;height:35px;flex:none;background:#d6d8d9;font:13px ${FONT};color:#31363b;position:relative;z-index:0}
.start{width:36px;flex:none;display:flex;align-items:center;justify-content:center;background:#e2e3e4}
.show{width:33px;flex:none;padding:2px 4px 0;box-sizing:border-box;background:#d9dbdc}
.show i{display:block;width:25px;height:14px;background:#4c8db8;border:1px solid #3a7aa6;box-sizing:border-box}
.tasks{display:flex;flex:none}
.tray{flex:1;background:#eff0f1;display:flex;align-items:center;padding-left:14px;min-width:0}
.t{width:24px;display:flex;justify-content:center;flex:none}
.clock{font-size:23px;color:#31363b;flex:none;margin-left:3px;width:63px;white-space:nowrap;line-height:35px}
.m{width:15px;height:32px;border:1px solid #a9acae;border-radius:4px;box-sizing:border-box;background:#fff;flex:none;display:flex;flex-direction:column;justify-content:flex-end;overflow:hidden}
.m i{display:block;background:#3a8fc4}
.ham{margin-left:9px;display:flex;flex-direction:column;gap:4px;flex:none}
.ham i{display:block;width:12px;height:2px;background:#7f8284}
</style>
<div class="start"><svg width="30" height="30" viewBox="0 0 30 30"><circle cx="15" cy="15" r="14" fill="#2e3236" stroke="#cfd2d4" stroke-width="1"/><path d="M5 17c2-8 13-10 20-5c1 3 0 6-2 8c-4 2-9 1-9-3" fill="none" stroke="#eff0f1" stroke-width="2"/><circle cx="18" cy="14" r="3" fill="none" stroke="#eff0f1" stroke-width="1.500"/></svg></div>
<div class="show"><i></i></div>
<div class="tasks"><slot></slot></div>
<div class="tray">
  <div class="t">${svg('sun',24)}</div><div class="t">${svg('usb',20)}</div><div class="t">${svg('flag',22)}</div><div class="t" style="width:30px">${svg('speaker',20)}</div><div class="t" style="width:24px">${svg('clip',20)}</div><div class="t" style="width:28px">${svg('tri',16)}</div>
  <div class="clock">19:59</div>
  <div class="m"><i style="height:9px"></i></div>
  <div class="m" style="margin-left:5px;background:#4aa9e0;border-color:#7fb6d6"></div>
  <div class="ham"><i></i><i></i><i></i></div>
</div>`);

def('task-item',(e)=>{
  const st=e.getAttribute('state');
  const bg={light:'#e4e6e7',urgent:'#efd7bf',active:'#eceeef',lightstrip:'#e8eaeb'}[st]||'#cbcdce';
  const strip={urgent:'#eda15a',active:'#6fb6dd',lightstrip:'#c3c6c8'}[st];
  return `<style>:host{display:flex;align-items:center;width:193.600px;height:35px;box-sizing:border-box;flex:none;padding:0 6px 0 8px;gap:var(--gap,7px);background:${bg};border-right:1px solid #e2e3e4;position:relative;white-space:nowrap;overflow:hidden}
  .s{position:absolute;left:0;right:0;top:0;height:4px;background:${strip||'transparent'}}</style><div class="s"></div>${svg(e.getAttribute('icon'),20)}<slot></slot>`;
});

def('video-caption',()=>`<style>:host{position:absolute;left:0;top:973px;width:901px;height:106px;border:1px solid #2e4a3a;box-sizing:border-box;display:flex;flex-direction:column;padding:0 0 0 1px;font:43.300px/51px "Liberation Sans",sans-serif;white-space:nowrap;color:rgba(224,224,224,.85)}
.o{color:#e0e0e0}.u{padding-left:66px;font-size:45.500px;line-height:52px;letter-spacing:-.1px}</style>
<div><span class="o">О</span> том и о сём .Винда и Линукс</div>
<div class="u">http://www.otomioseom-vindous-linuks.ru/</div>`);
</script>
</body>
</html>
